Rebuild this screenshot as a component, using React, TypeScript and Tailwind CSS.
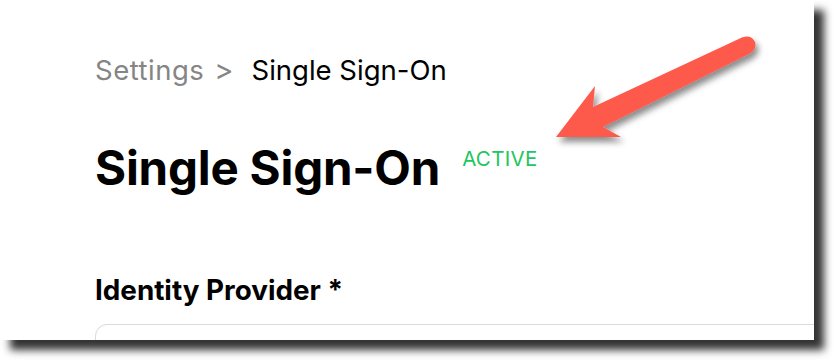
import React from "react";

export default function App() {
  return (
    <div className="w-[834px] h-[360px] bg-white overflow-hidden" style={{ fontFamily: "Inter, 'Liberation Sans', sans-serif" }}>
      <div className="relative w-[814px] h-[340px] bg-white shadow-[10px_10px_8px_rgba(0,0,0,0.8)] overflow-hidden">
        <div className="pl-[95px] pt-[53px] flex flex-col">
          <div className="flex items-center text-[27.5px] leading-[34px]">
            <span className="text-[#858585] tracking-[0.5px]">Settings</span>
            <span className="text-[#858585] text-[29px] ml-[10px] mr-[18px]">&gt;</span>
            <span className="text-black">Single Sign-On</span>
          </div>
          <div className="flex items-start mt-[53px]">
            <h1 className="text-[47.5px] leading-[56px] font-bold text-black tracking-[-0.2px]">Single Sign-On</h1>
            <span className="ml-[22px] mt-[7px] text-[20.5px] leading-[24px] text-[#22c55e] tracking-[0.3px]">ACTIVE</span>
          </div>
          <div className="mt-[78px] text-[27.8px] leading-[32px] font-bold text-black">Identity Provider *</div>
          <div className="mt-[18px] h-[60px] w-[800px] rounded-[12px] border-[1.5px] border-[#d9d9de]" />
        </div>
        <svg className="absolute left-0 top-0" width="814" height="340" viewBox="0 0 814 340">
          <defs>
            <filter id="sh" x="-20%" y="-20%" width="140%" height="140%">
              <feDropShadow dx="3" dy="5" stdDeviation="3" floodColor="#000" floodOpacity="0.45" />
            </filter>
          </defs>
          <g filter="url(#sh)">
            <polygon points="556,137 595,86 593,107 743,37 751,53 603,127 621,137" fill="#fd5a4c" />
            <circle cx="747" cy="45" r="8.5" fill="#fd5a4c" />
          </g>
        </svg>
      </div>
    </div>
  );
}
